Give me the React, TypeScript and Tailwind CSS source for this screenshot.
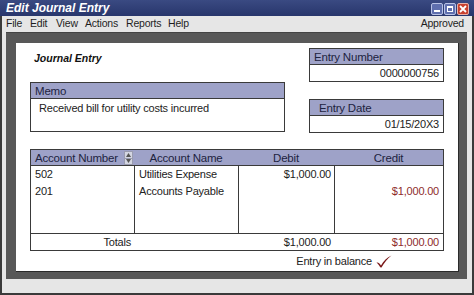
import React from "react";

const font = { fontFamily: '"Liberation Sans", Arial, sans-serif' };

function WinBtn({ kind }: { kind: "min" | "max" | "close" }) {
  if (kind === "close") {
    return (
      <div className="w-[12px] h-[12px] rounded-[2px] bg-[#c8412f] border border-[#e8b0a8] flex items-center justify-center">
        <svg width="8" height="8" viewBox="0 0 8 8">
          <path d="M1 1 L7 7 M7 1 L1 7" stroke="#fff" strokeWidth="1.8" />
        </svg>
      </div>
    );
  }
  return (
    <div className="w-[12px] h-[12px] rounded-[2px] bg-[#5f6fae] border border-[#b8c2e6] relative">
      {kind === "min" ? (
        <div className="absolute left-[2px] right-[2px] bottom-[2px] h-[2px] bg-white" />
      ) : (
        <div className="absolute left-[2px] right-[2px] top-[2px] bottom-[2px] border border-white border-t-[2px]" />
      )}
    </div>
  );
}

function Box({ title, value, titleClass }: { title: string; value: string; titleClass?: string }) {
  return (
    <div className="border border-[#3a3a3a]">
      <div className={"h-[16px] bg-[#9ea2c8] border-b border-[#3a3a3a] text-[11.5px] tracking-[-0.2px] leading-[16px] text-[#1d2340] " + (titleClass ?? "pl-[4px]")}>
        {title}
      </div>
      <div className="h-[16px] text-[11px] tracking-[-0.2px] leading-[16px] text-right pr-[4px] text-[#222]">{value}</div>
    </div>
  );
}

export default function App() {
  return (
    <div className="w-[474px] h-[295px] bg-[#3a3a3a] px-[2px] pb-[2px] flex flex-col overflow-hidden" style={font}>
      {/* title bar */}
      <div className="h-[16px] -mx-[2px] bg-gradient-to-b from-[#3a4a82] to-[#28366c] flex items-center justify-between pl-[6px] pr-[5px]">
        <span className="text-white font-bold italic text-[12px] leading-none">Edit Journal Entry</span>
        <div className="flex gap-[1px] mt-[1px]">
          <WinBtn kind="min" />
          <WinBtn kind="max" />
          <WinBtn kind="close" />
        </div>
      </div>
      {/* window body */}
      <div className="flex-1 bg-[#e6e6e6] flex flex-col">
        <div className="h-[16px] flex items-center justify-between pl-[4px] pr-[8px] text-[10.5px] tracking-[-0.2px] text-[#1e1e1e]">
          <div className="flex">
            <span className="w-[24px]">File</span>
            <span className="w-[26px]">Edit</span>
            <span className="w-[29px]">View</span>
            <span className="w-[41px]">Actions</span>
            <span className="w-[42px]">Reports</span>
            <span>Help</span>
          </div>
          <span>Approved</span>
        </div>
        <div className="ml-[4px] mr-[5px] h-[247px] bg-[#585858] border-t border-[#444] pt-[10px] pl-[10px] pr-[10px] pb-[7px] flex">
          <div className="flex-1 bg-white border-r border-b border-[#2a2a2a] px-[14px] pt-[5px] flex flex-col">
            {/* top */}
            <div className="flex justify-between">
              <div className="w-[255px] flex flex-col">
                <div className="h-[34px] pl-[4px] pt-[3px] text-[10.5px] font-bold italic text-[#111]">Journal Entry</div>
                <div className="h-[50px] border border-[#3a3a3a]">
                  <div className="h-[16px] bg-[#9ea2c8] border-b border-[#3a3a3a] text-[11.5px] tracking-[-0.2px] leading-[16px] text-[#1d2340] pl-[4px]">Memo</div>
                  <div className="pl-[8px] pt-[2px] text-[11px] tracking-[-0.2px] leading-[14px] text-[#222]">Received bill for utility costs incurred</div>
                </div>
              </div>
              <div className="w-[135px] flex flex-col gap-[17px]">
                <Box title="Entry Number" value="0000000756" />
                <Box title="Entry Date" value="01/15/20X3" titleClass="pl-[9px]" />
              </div>
            </div>
            {/* table */}
            <div className="mt-[16px] w-[414px] border border-[#3a3a3a] text-[11px] tracking-[-0.2px] text-[#222]">
              <div className="h-[16px] bg-[#9ea2c8] border-b border-[#3a3a3a] grid grid-cols-[103px_104px_96px_109px] text-[11.5px] leading-[16px] text-[#1d2340]">
                <div className="pl-[4px] flex items-center justify-between pr-[1px]">
                  <span>Account Number</span>
                  <div className="w-[9px] h-[14px] bg-[#d4d6e2] border border-[#9a9cb0] flex flex-col items-center justify-between py-[1px]">
                    <svg width="5" height="4" viewBox="0 0 5 4"><path d="M2.5 0 L5 4 L0 4 Z" fill="#555" /></svg>
                    <div className="w-full h-px bg-[#9a9cb0]" />
                    <svg width="5" height="4" viewBox="0 0 5 4"><path d="M0 0 L5 0 L2.5 4 Z" fill="#555" /></svg>
                  </div>
                </div>
                <div className="text-center">Account Name</div>
                <div className="text-center">Debit</div>
                <div className="text-center">Credit</div>
              </div>
              <div className="h-[67px] grid grid-cols-[103px_104px_96px_109px] leading-[17px]">
                <div className="pl-[4px]">
                  <div>502</div>
                  <div>201</div>
                </div>
                <div className="border-l border-[#3a3a3a] pl-[4px]">
                  <div>Utilities Expense</div>
                  <div>Accounts Payable</div>
                </div>
                <div className="border-l border-[#3a3a3a] pr-[3px] text-right">
                  <div>$1,000.00</div>
                </div>
                <div className="border-l border-[#3a3a3a] pr-[4px] text-right text-[#8e2b2b]">
                  <div>&nbsp;</div>
                  <div>$1,000.00</div>
                </div>
              </div>
              <div className="h-[17px] border-t border-[#3a3a3a] grid grid-cols-[103px_104px_96px_109px] leading-[16px]">
                <div className="text-right pr-[3px]">Totals</div>
                <div />
                <div className="text-right pr-[3px]">$1,000.00</div>
                <div className="text-right pr-[4px] text-[#8e2b2b]">$1,000.00</div>
              </div>
            </div>
            <div className="w-[414px] flex justify-end pr-[52px] mt-[2px] items-center gap-[4px] text-[11px] tracking-[-0.2px] text-[#222]">
              <span>Entry in balance</span>
              <svg width="16" height="13" viewBox="0 0 16 13">
                <path d="M0.5 7.5 C2 7 3.5 8 5 10.5 C7.5 6 11 2.5 15.5 0.5 C11.5 3.5 8 8 5.5 12.5 C4.5 12.5 4 12 3.5 11 C2.5 9.5 1.5 8.3 0.5 7.5 Z" fill="#7a1818" />
              </svg>
            </div>
          </div>
        </div>
      </div>
    </div>
  );
}
